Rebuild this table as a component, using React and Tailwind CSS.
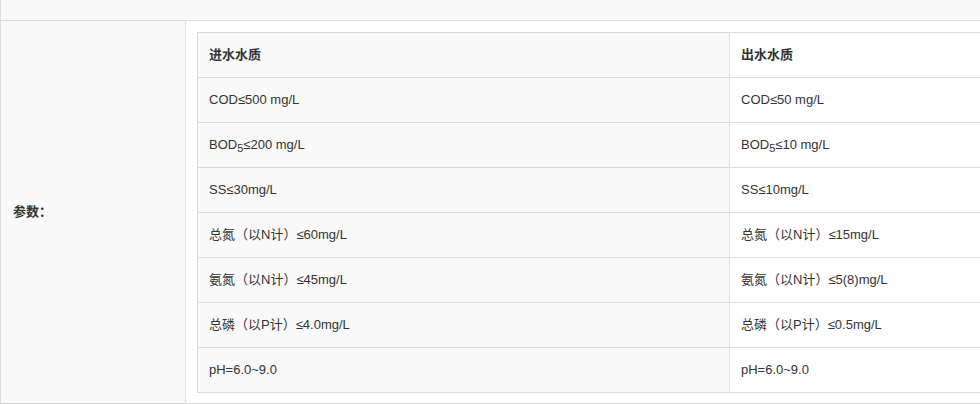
import React from 'react';

const rows = [
  [<>COD≤500 mg/L</>, <>COD≤50 mg/L</>],
  [<>BOD<sub className="text-[11px]">5</sub>≤200 mg/L</>, <>BOD<sub className="text-[11px]">5</sub>≤10 mg/L</>],
  [<>SS≤30mg/L</>, <>SS≤10mg/L</>],
  [<>总氮（以N计）≤60mg/L</>, <>总氮（以N计）≤15mg/L</>],
  [<>氨氮（以N计）≤45mg/L</>, <>氨氮（以N计）≤5(8)mg/L</>],
  [<>总磷（以P计）≤4.0mg/L</>, <>总磷（以P计）≤0.5mg/L</>],
  [<>pH=6.0~9.0</>, <>pH=6.0~9.0</>],
];

export default function App() {
  return (
    <div
      className="w-[980px] h-[405px] overflow-hidden bg-white text-[13px] text-[#333]"
      style={{ fontFamily: '"Liberation Sans", Arial, "Noto Sans CJK SC", sans-serif' }}
    >
      <div className="w-[1300px] border-l border-[#ddd]">
        {/* 上一行（被截断） */}
        <div className="h-[21px] bg-[#f9f9f9] border-b border-[#ddd]" />

        <div className="flex border-b border-[#ddd]">
          <div className="w-[185px] shrink-0 bg-[#f9f9f9] border-r border-[#ddd] flex items-center pl-[12px] font-bold">
            参数：
          </div>
          <div className="bg-white pt-[11px] pl-[11px] pb-[10px]">
            <table className="border-collapse w-[1064px]">
              <thead>
                <tr>
                  <th className="w-[532px] h-[45px] border border-[#ddd] bg-[#f9f9f9] px-[11px] text-left font-bold leading-[20px]">
                    进水水质
                  </th>
                  <th className="h-[45px] border border-[#ddd] bg-white px-[11px] text-left font-bold leading-[20px]">
                    出水水质
                  </th>
                </tr>
              </thead>
              <tbody>
                {rows.map((r, i) => (
                  <tr key={i}>
                    <td className="h-[45px] border border-[#ddd] bg-[#f9f9f9] px-[11px] leading-[20px]">{r[0]}</td>
                    <td className="h-[45px] border border-[#ddd] bg-white px-[11px] leading-[20px]">{r[1]}</td>
                  </tr>
                ))}
              </tbody>
            </table>
          </div>
        </div>
      </div>
    </div>
  );
}
